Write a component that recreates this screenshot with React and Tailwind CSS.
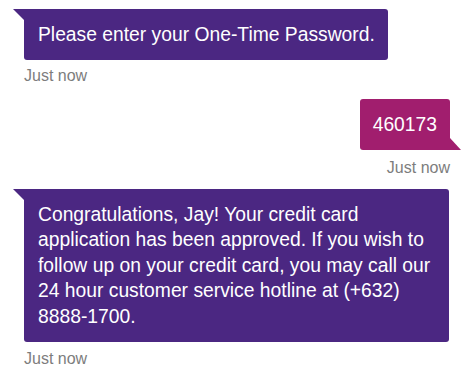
import React from "react";

const font = { fontFamily: '"Liberation Sans", Arial, Helvetica, sans-serif' };

function Stamp({ right, className = "" }) {
  return (
    <div
      className={`text-[16px] leading-[16px] text-[#7d7d7d] ${right ? "self-end" : "self-start"} ${className}`}
    >
      Just now
    </div>
  );
}

export default function App() {
  return (
    <div className="w-[474px] h-[378px] bg-white overflow-hidden" style={font}>
      <div className="flex flex-col pt-[9px] pl-[24px] pr-[24px]">
        {/* Bubble 1 */}
        <div className="relative self-start bg-[#4b2782] text-white text-[19.3px] leading-[25px] pl-[14px] pr-[13px] py-[13px] rounded-[3px] rounded-tl-none whitespace-nowrap">
          <svg className="absolute top-0 left-[-11px]" width="11" height="11" viewBox="0 0 11 11">
            <polygon points="0,0 11,0 11,11" fill="#4b2782" />
          </svg>
          Please enter your One-Time Password.
        </div>
        <Stamp className="mt-[8px]" />

        {/* Bubble 2 */}
        <div className="relative self-end mt-[15px] bg-[#a11e6e] text-white text-[19.3px] leading-[25px] px-[13px] py-[13px] rounded-[3px] rounded-br-none">
          <svg className="absolute bottom-0 right-[-11px]" width="11" height="12" viewBox="0 0 11 12">
            <polygon points="0,0 11,12 0,12" fill="#a11e6e" />
          </svg>
          460173
        </div>
        <Stamp right className="mt-[10px]" />

        {/* Bubble 3 */}
        <div className="relative self-start mt-[13px] w-[425px] bg-[#4b2782] text-white text-[19.3px] leading-[25.5px] pl-[14px] pr-[8px] py-[12.5px] rounded-[3px] rounded-tl-none whitespace-nowrap">
          <svg className="absolute top-0 left-[-11px]" width="11" height="11" viewBox="0 0 11 11">
            <polygon points="0,0 11,0 11,11" fill="#4b2782" />
          </svg>
          Congratulations, Jay! Your credit card
          <br />
          application has been approved. If you wish to
          <br />
          follow up on your credit card, you may call our
          <br />
          24 hour customer service hotline at (+632)
          <br />
          8888-1700.
        </div>
        <Stamp className="mt-[9px]" />
      </div>
    </div>
  );
}
